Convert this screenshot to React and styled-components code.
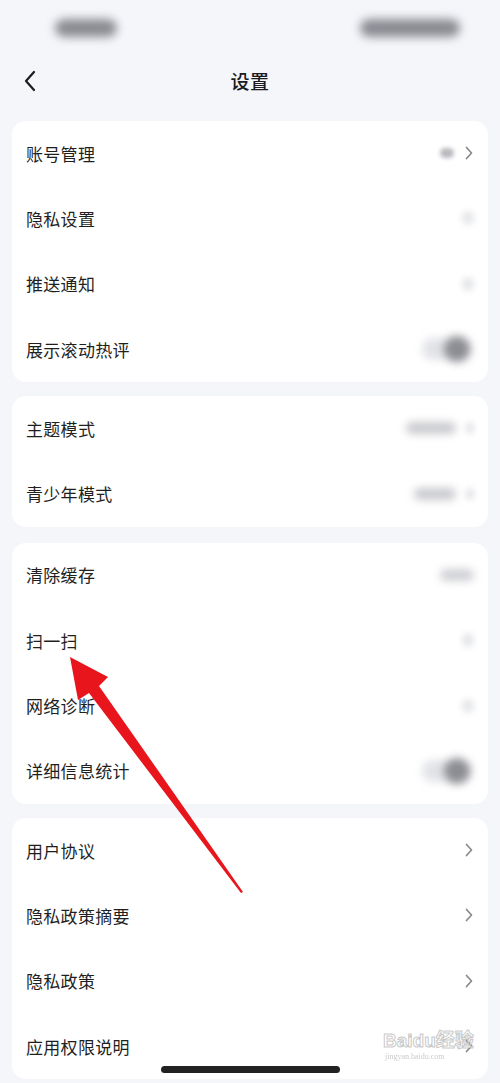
import React from "react";
import styled, { createGlobalStyle } from "styled-components";

const Global = createGlobalStyle`
  html, body { margin: 0; padding: 0; background: #f5f6fa; }
  body { font-family: "Noto Sans CJK SC", "Noto Sans", sans-serif; }
  * { box-sizing: border-box; }
`;

const Page = styled.div`
  position: relative;
  width: 500px;
  height: 1083px;
  overflow: hidden;
  background: #f5f6fa;
  display: flex;
  flex-direction: column;
`;

const StatusBar = styled.div`
  height: 56px;
  display: flex;
  justify-content: space-between;
  align-items: center;
  padding: 0 40px 0 55px;
`;

const Blob = styled.div`
  width: ${(p) => p.$w}px;
  height: ${(p) => p.$h}px;
  border-radius: ${(p) => p.$r ?? 8}px;
  background: ${(p) => p.$c || "#9a9ca3"};
  filter: blur(${(p) => p.$blur ?? 4}px);
  flex: none;
`;

const NavBar = styled.div`
  position: relative;
  height: 50px;
  display: flex;
  align-items: center;
  justify-content: center;
`;

const Back = styled.div`
  position: absolute;
  left: 22px;
  top: 14px;
  width: 18px;
  height: 22px;
  display: flex;
`;

const Title = styled.div`
  font-size: 19px;
  font-weight: 500;
  color: #1c1c1e;
  letter-spacing: 0.5px;
  margin-top: -2px;
`;

const List = styled.div`
  padding: 15px 12px 0;
  display: flex;
  flex-direction: column;
`;

const Card = styled.div`
  background: #ffffff;
  border-radius: 14px;
  margin-bottom: ${(p) => p.$gap ?? 15}px;
  display: flex;
  flex-direction: column;
`;

const Row = styled.div`
  height: 65.3px;
  display: flex;
  align-items: center;
  justify-content: space-between;
  padding: 0 14px 1px 14px;
`;

const Label = styled.div`
  font-size: 17px;
  color: #1f1f1f;
  letter-spacing: 0.3px;
`;

const Right = styled.div`
  display: flex;
  align-items: center;
  gap: 10px;
`;

const Toggle = styled.div`
  position: relative;
  width: 50px;
  height: 30px;
  margin-right: 2px;
  filter: blur(4px);
`;

const ToggleTrack = styled.div`
  position: absolute;
  inset: 4px 0;
  border-radius: 14px;
  background: #e2e3e7;
`;

const ToggleKnob = styled.div`
  position: absolute;
  right: 2px;
  top: 2px;
  width: 26px;
  height: 26px;
  border-radius: 50%;
  background: #8c8d92;
`;

const HomeBar = styled.div`
  position: absolute;
  left: 161px;
  top: 1066px;
  width: 179px;
  height: 7px;
  border-radius: 4px;
  background: #222;
`;

const Watermark = styled.div`
  position: absolute;
  left: 383px;
  top: 1030px;
  width: 100px;
  display: flex;
  flex-direction: column;
  align-items: flex-start;
  pointer-events: none;
`;

const WmMain = styled.div`
  font-family: "Liberation Sans", "Noto Sans CJK SC", sans-serif;
  font-weight: 700;
  font-size: 19px;
  line-height: 22px;
  color: rgba(255, 255, 255, 0.6);
  -webkit-text-stroke: 1px rgba(150, 150, 150, 0.55);
  white-space: nowrap;
`;

const WmSub = styled.div`
  font-family: "Liberation Serif", serif;
  font-size: 8px;
  color: rgba(150, 150, 150, 0.5);
  margin-left: 2px;
  filter: blur(0.4px);
`;

const ArrowSvg = styled.svg`
  position: absolute;
  left: 0;
  top: 0;
  pointer-events: none;
`;

const Chevron = () => (
  <svg width="10" height="16" viewBox="0 0 10 16">
    <path d="M2.5 2.5 L7.5 8 L2.5 13.5" fill="none" stroke="#8a8a8e" strokeWidth="1.7" strokeLinecap="round" strokeLinejoin="round" />
  </svg>
);

const cards = [
  {
    gap: 14,
    rows: [
      { label: "账号管理", right: "acct" },
      { label: "隐私设置", right: "faint" },
      { label: "推送通知", right: "faint" },
      { label: "展示滚动热评", right: "toggle" },
    ],
  },
  {
    gap: 16,
    rows: [
      { label: "主题模式", right: "text", w: 50 },
      { label: "青少年模式", right: "text", w: 42 },
    ],
  },
  {
    gap: 14,
    rows: [
      { label: "清除缓存", right: "text2", w: 34 },
      { label: "扫一扫", right: "faint" },
      { label: "网络诊断", right: "faint" },
      { label: "详细信息统计", right: "toggle" },
    ],
  },
  {
    gap: 0,
    rows: [
      { label: "用户协议", right: "chev" },
      { label: "隐私政策摘要", right: "chev" },
      { label: "隐私政策", right: "chev" },
      { label: "应用权限说明", right: "chev" },
    ],
  },
];

const renderRight = (r) => {
  switch (r.right) {
    case "acct":
      return (
        <Right>
          <Blob $w={14} $h={10} $r={5} $c="#b8b9be" $blur={2} />
          <Chevron />
        </Right>
      );
    case "faint":
      return (
        <Right>
          <Blob $w={12} $h={14} $r={6} $c="#e6e7ea" $blur={3} />
        </Right>
      );
    case "toggle":
      return (
        <Toggle>
          <ToggleTrack />
          <ToggleKnob />
        </Toggle>
      );
    case "text":
      return (
        <Right>
          <Blob $w={r.w} $h={12} $r={6} $c="#c9cace" $blur={4} />
          <Blob $w={8} $h={12} $r={4} $c="#e3e4e7" $blur={3} />
        </Right>
      );
    case "text2":
      return (
        <Right>
          <Blob $w={r.w} $h={12} $r={6} $c="#cfd0d4" $blur={4} />
        </Right>
      );
    case "chev":
    default:
      return <Chevron />;
  }
};

export default function App() {
  return (
    <>
      <Global />
      <Page>
        <StatusBar>
          <Blob $w={62} $h={18} $r={9} $c="#8a8b91" $blur={5} />
          <Blob $w={100} $h={18} $r={9} $c="#8a8b91" $blur={5} />
        </StatusBar>
        <NavBar>
          <Back>
            <svg width="18" height="22" viewBox="0 0 18 22">
              <path d="M12 2 L4 11 L12 20" fill="none" stroke="#1c1c1e" strokeWidth="2.2" strokeLinecap="round" strokeLinejoin="round" />
            </svg>
          </Back>
          <Title>设置</Title>
        </NavBar>
        <List>
          {cards.map((c, i) => (
            <Card key={i} $gap={c.gap}>
              {c.rows.map((r) => (
                <Row key={r.label}>
                  <Label>{r.label}</Label>
                  {renderRight(r)}
                </Row>
              ))}
            </Card>
          ))}
        </List>

        <ArrowSvg width="500" height="1083" viewBox="0 0 500 1083">
          <defs>
            <filter id="soft" x="-10%" y="-10%" width="120%" height="120%">
              <feGaussianBlur stdDeviation="0.6" />
            </filter>
          </defs>
          <polygon
            points="70,657 108,677 99,686 243,892 241,893 89,693 78,700"
            fill="#e8141b"
            filter="url(#soft)"
          />
        </ArrowSvg>

        <Watermark>
          <WmMain>Baidu经验</WmMain>
          <WmSub>jingyan.baidu.com</WmSub>
        </Watermark>

        <HomeBar />
      </Page>
    </>
  );
}
